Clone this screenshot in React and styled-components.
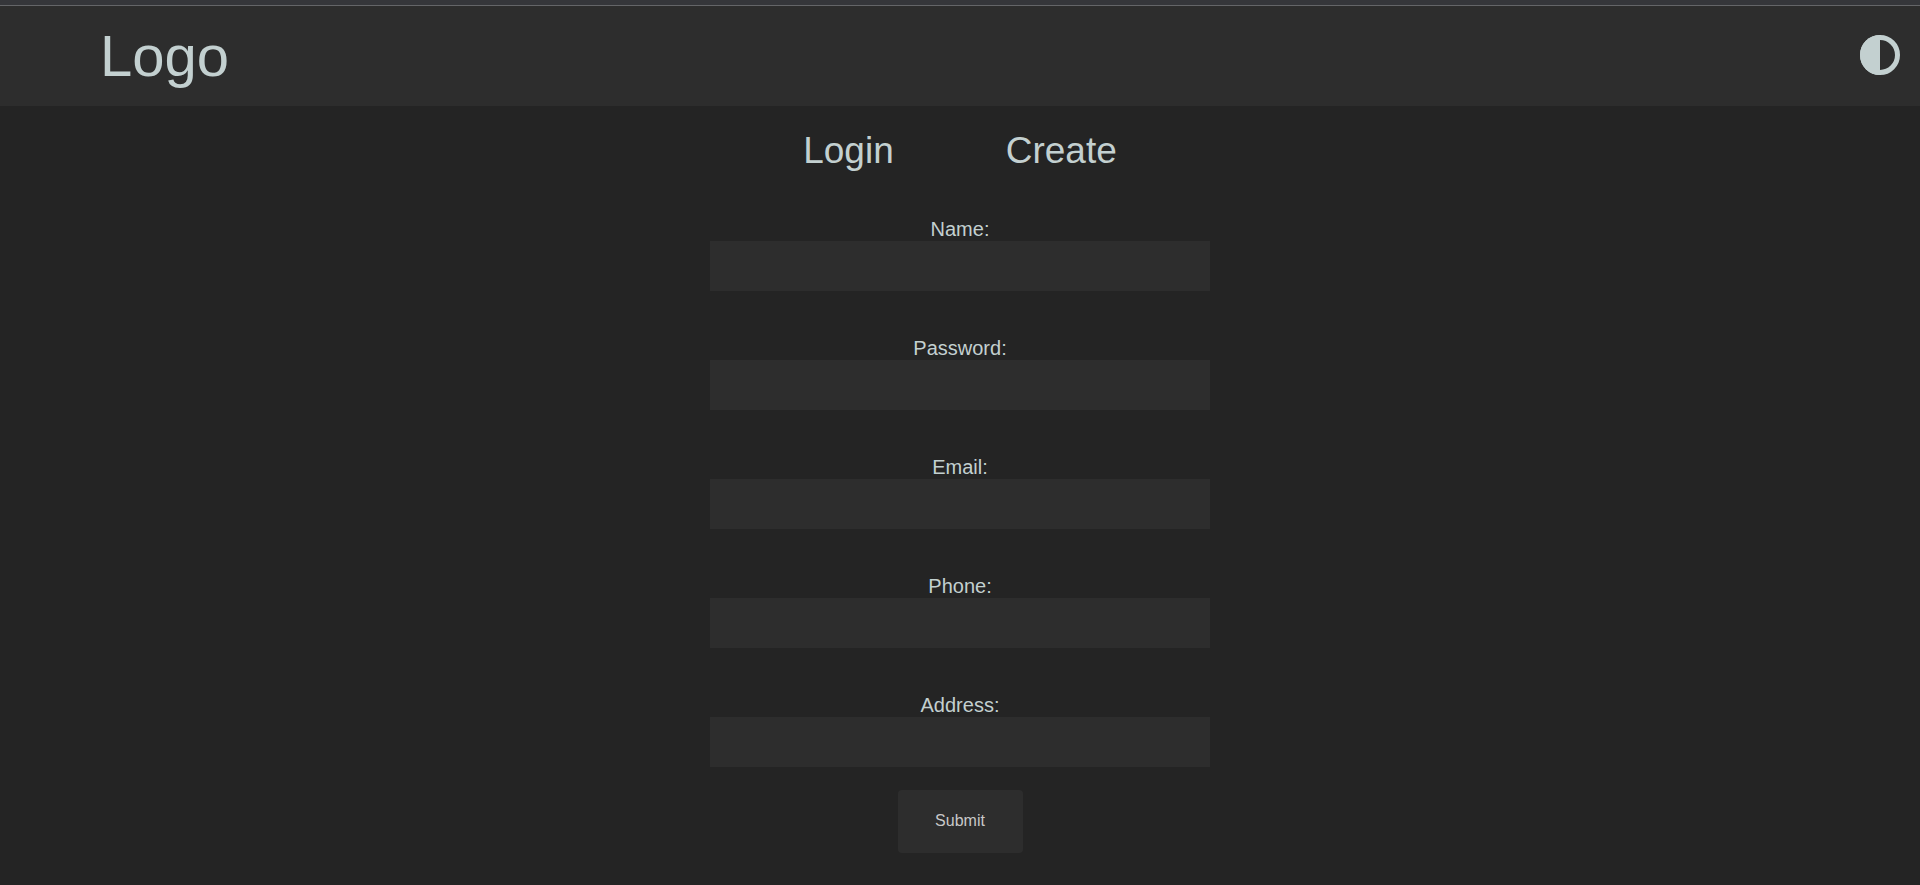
import React from 'react';
import styled, { createGlobalStyle } from 'styled-components';

const GlobalStyle = createGlobalStyle`
  * { box-sizing: border-box; }
  body {
    margin: 0;
    background: #242424;
    color: #c3d0d0;
    font-family: "Liberation Sans", Arial, sans-serif;
    font-size: 20px;
  }
`;

const WindowEdge = styled.div`
  height: 6px;
  background: #35363a;
  border-bottom: 1px solid #646568;
`;

const Header = styled.header`
  display: flex;
  align-items: center;
  justify-content: space-between;
  height: 100px;
  padding: 0 20px 2px 100px;
  background: #2d2d2d;
`;

const Logo = styled.a`
  color: inherit;
  font-size: 58px;
  text-decoration: none;
`;

const ThemeButton = styled.button`
  display: flex;
  padding: 0;
  border: 0;
  background: none;
  color: #c3d0d0;
`;

const Tabs = styled.nav`
  display: flex;
  justify-content: center;
  gap: 112px;
  padding-top: 23px;
`;

const Tab = styled.a`
  color: inherit;
  font-size: 37px;
  line-height: 44px;
  text-decoration: none;
`;

const Form = styled.form`
  display: flex;
  flex-direction: column;
  align-items: center;
  padding: 45px 0 32px;
`;

const Field = styled.div`
  display: flex;
  flex-direction: column;
  width: 500px;
  max-width: 100%;
  margin-bottom: ${({ $last }) => ($last ? '23px' : '46px')};
  text-align: center;
`;

const Label = styled.label`
  line-height: 23px;
`;

const Input = styled.input`
  height: 50px;
  padding: 0 12px;
  border: 0;
  border-radius: 0;
  background: #2d2d2d;
  color: inherit;
  font: inherit;
`;

const Submit = styled.button`
  width: 125px;
  height: 63px;
  padding: 0 0 2px;
  border: 0;
  border-radius: 4px;
  background: #2d2d2d;
  color: #c8c8c8;
  font-family: inherit;
  font-size: 16px;
`;

const fields = [
  ['name', 'Name:', 'text'],
  ['password', 'Password:', 'password'],
  ['email', 'Email:', 'email'],
  ['phone', 'Phone:', 'tel'],
  ['address', 'Address:', 'text'],
];

export default function App() {
  return (
    <>
      <GlobalStyle />
      <WindowEdge />
      <Header>
        <Logo href="#">Logo</Logo>
        <ThemeButton type="button" aria-label="Toggle theme">
          <svg width="40" height="40" viewBox="0 0 40 40">
            <circle cx="20" cy="20" r="17.5" fill="none" stroke="currentColor" strokeWidth="5" />
            <path d="M20 0a20 20 0 0 0 0 40z" fill="currentColor" />
          </svg>
        </ThemeButton>
      </Header>
      <main>
        <Tabs>
          <Tab href="#login">Login</Tab>
          <Tab href="#create">Create</Tab>
        </Tabs>
        <Form>
          {fields.map(([id, label, type], i) => (
            <Field key={id} $last={i === fields.length - 1}>
              <Label htmlFor={id}>{label}</Label>
              <Input id={id} type={type} />
            </Field>
          ))}
          <Submit type="submit">Submit</Submit>
        </Form>
      </main>
    </>
  );
}
